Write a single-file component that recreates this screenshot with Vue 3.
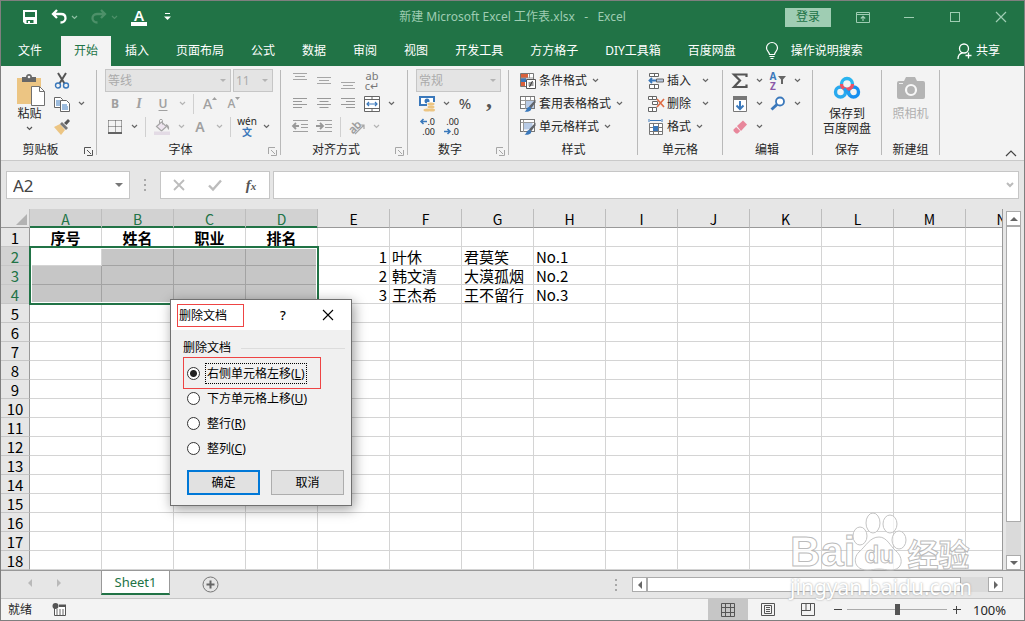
<template>
  <div class="window">
    <header class="title-bar">
      <div class="quick-access">
        <button class="qa-btn" aria-label="保存"><Icon name="save" /></button>
        <button class="qa-btn" aria-label="撤消"><Icon name="undo" /></button>
        <button class="qa-caret faded" aria-label="撤消列表"><Icon name="caret" :w="7" :h="5" /></button>
        <button class="qa-btn faint" aria-label="恢复"><Icon name="redo" /></button>
        <button class="qa-caret faint" aria-label="恢复列表"><Icon name="caret" :w="7" :h="5" /></button>
        <button class="qa-btn font-bar">A</button>
        <button class="qa-more" aria-label="自定义快速访问工具栏"><Icon name="qaMore" :w="7" :h="8" /></button>
      </div>
      <div class="title">新建 Microsoft Excel 工作表.xlsx&nbsp;&nbsp; -&nbsp;&nbsp; Excel</div>
      <div class="window-controls">
        <button class="login">登录</button>
        <button class="win-btn" aria-label="功能区显示选项"><Icon name="ribbonMode" :w="14" :h="14" /></button>
        <button class="win-btn" aria-label="最小化"><Icon name="minimize" :w="14" :h="14" /></button>
        <button class="win-btn" aria-label="最大化"><Icon name="maximize" :w="14" :h="14" /></button>
        <button class="win-btn" aria-label="关闭"><Icon name="close" :w="14" :h="14" /></button>
      </div>
    </header>

    <nav class="tabs">
      <button
        v-for="tab in tabs"
        :key="tab"
        class="tab"
        :class="{ active: tab === activeTab, file: tab === '文件' }"
        @click="activeTab = tab"
      >{{ tab }}</button>
      <button class="tell-me"><Icon name="bulb" :w="14" :h="18" />操作说明搜索</button>
      <button class="share"><Icon name="share" />共享</button>
    </nav>

    <section class="ribbon">
      <div class="group clipboard">
        <div class="group-body row-body">
          <button class="big-btn paste">
            <Icon name="paste" :w="30" :h="32" />
            <span>粘贴</span>
            <Icon name="caret" :w="7" :h="5" />
          </button>
          <div class="rows">
            <div class="tool-row"><button class="tool" aria-label="剪切"><Icon name="cut" /></button></div>
            <div class="tool-row">
              <button class="tool" aria-label="复制"><Icon name="copy" /></button>
              <button class="drop" aria-label="复制选项"><Icon name="caret" :w="7" :h="5" /></button>
            </div>
            <div class="tool-row"><button class="tool" aria-label="格式刷"><Icon name="brush" /></button></div>
          </div>
        </div>
        <div class="group-label"><span>剪贴板</span><button class="launcher" aria-label="剪贴板设置"><Icon name="launcher" :w="9" :h="9" /></button></div>
      </div>
      <i class="divider"></i>

      <div class="group font">
        <div class="group-body">
          <div class="tool-row selects">
            <span class="select-wrap font-name"><select aria-label="字体" disabled><option>等线</option></select></span>
            <span class="select-wrap font-size"><select aria-label="字号" disabled><option>11</option></select></span>
          </div>
          <div class="tool-row disabled">
            <button class="tool letter bold" disabled>B</button>
            <button class="tool letter italic" disabled>I</button>
            <button class="tool letter underline" disabled>U</button>
            <button class="drop" aria-label="下划线选项" disabled><Icon name="caret" :w="7" :h="5" /></button>
            <i class="sep"></i>
            <button class="tool letter grow" disabled>A<Icon name="triUp" :w="5" :h="10" /></button>
            <button class="tool letter shrink" disabled>A<Icon name="triDown" :w="5" :h="10" /></button>
          </div>
          <div class="tool-row">
            <button class="tool" aria-label="边框"><Icon name="borders" /></button>
            <button class="drop" aria-label="边框选项"><Icon name="caret" :w="7" :h="5" /></button>
            <i class="sep"></i>
            <button class="tool" aria-label="填充颜色" disabled><Icon name="bucket" /></button>
            <button class="drop pale" aria-label="填充选项" disabled><Icon name="caret" :w="7" :h="5" /></button>
            <button class="tool letter color" disabled>A</button>
            <button class="drop pale" aria-label="颜色选项" disabled><Icon name="caret" :w="7" :h="5" /></button>
            <i class="sep"></i>
            <button class="tool wen"><span>wén</span><b>文</b></button>
            <button class="drop" aria-label="拼音选项"><Icon name="caret" :w="7" :h="5" /></button>
          </div>
        </div>
        <div class="group-label"><span>字体</span><button class="launcher pale" aria-label="字体设置"><Icon name="launcher" :w="9" :h="9" /></button></div>
      </div>
      <i class="divider"></i>

      <div class="group align">
        <div class="group-body">
          <div class="tool-row">
            <button class="tool" aria-label="顶端对齐"><Icon name="alignTop" /></button>
            <button class="tool" aria-label="垂直居中"><Icon name="alignMiddle" /></button>
            <button class="tool" aria-label="底端对齐"><Icon name="alignBottom" /></button>
            <button class="tool wrap"><span>ab</span><span>c↵</span></button>
          </div>
          <div class="tool-row">
            <button class="tool" aria-label="左对齐"><Icon name="alignLeft" /></button>
            <button class="tool" aria-label="居中"><Icon name="alignCenter" /></button>
            <button class="tool" aria-label="右对齐"><Icon name="alignRight" /></button>
            <button class="tool" aria-label="合并后居中"><Icon name="merge" /></button>
            <button class="drop" aria-label="合并选项"><Icon name="caret" :w="7" :h="5" /></button>
          </div>
          <div class="tool-row">
            <button class="tool" aria-label="减少缩进量"><Icon name="outdent" /></button>
            <button class="tool" aria-label="增加缩进量"><Icon name="indent" /></button>
            <i class="sep"></i>
            <button class="tool" aria-label="方向"><Icon name="orient" /></button>
            <button class="drop pale" aria-label="方向选项"><Icon name="caret" :w="7" :h="5" /></button>
          </div>
        </div>
        <div class="group-label"><span>对齐方式</span><button class="launcher pale" aria-label="对齐设置"><Icon name="launcher" :w="9" :h="9" /></button></div>
      </div>
      <i class="divider"></i>

      <div class="group number">
        <div class="group-body">
          <div class="tool-row selects">
            <span class="select-wrap"><select aria-label="数字格式" disabled><option>常规</option></select></span>
          </div>
          <div class="tool-row">
            <button class="tool" aria-label="会计数字格式"><Icon name="money" /></button>
            <button class="drop" aria-label="货币选项"><Icon name="caret" :w="7" :h="5" /></button>
            <button class="tool percent">%</button>
            <button class="tool comma">,</button>
          </div>
          <div class="tool-row">
            <button class="tool decimals" aria-label="增加小数位数">
              <span><Icon name="arrowLeft" :w="7" :h="7" />.0</span>
              <span>.00</span>
            </button>
            <button class="tool decimals" aria-label="减少小数位数">
              <span>.00</span>
              <span><Icon name="arrowRight" :w="7" :h="7" />.0</span>
            </button>
          </div>
        </div>
        <div class="group-label"><span>数字</span><button class="launcher pale" aria-label="数字设置"><Icon name="launcher" :w="9" :h="9" /></button></div>
      </div>
      <i class="divider"></i>

      <div class="group styles">
        <div class="group-body">
          <div v-for="item in styleItems" :key="item.text" class="tool-row">
            <button class="text-btn"><Icon :name="item.icon" />{{ item.text }}<Icon name="caret" class="tail" :w="7" :h="5" /></button>
          </div>
        </div>
        <div class="group-label"><span>样式</span></div>
      </div>
      <i class="divider"></i>

      <div class="group cells">
        <div class="group-body">
          <div v-for="item in cellItems" :key="item.text" class="tool-row">
            <button class="text-btn" :class="{ split: item.split }"><Icon :name="item.icon" />{{ item.text }}<Icon name="caret" class="tail" :w="7" :h="5" /></button>
          </div>
        </div>
        <div class="group-label"><span>单元格</span></div>
      </div>
      <i class="divider"></i>

      <div class="group edit">
        <div class="group-body">
          <div class="tool-row">
            <button class="tool" aria-label="自动求和"><Icon name="sigma" /></button>
            <button class="drop" aria-label="求和选项"><Icon name="caret" :w="7" :h="5" /></button>
            <button class="tool sort" aria-label="排序和筛选">
              <span class="az"><b>A</b><b class="z">Z</b></span>
              <Icon name="funnel" :w="8" :h="9" />
            </button>
            <button class="drop" aria-label="排序选项"><Icon name="caret" :w="7" :h="5" /></button>
          </div>
          <div class="tool-row">
            <button class="tool" aria-label="填充"><Icon name="fill" /></button>
            <button class="drop" aria-label="填充方向"><Icon name="caret" :w="7" :h="5" /></button>
            <button class="tool" aria-label="查找和选择"><Icon name="find" /></button>
            <button class="drop" aria-label="查找选项"><Icon name="caret" :w="7" :h="5" /></button>
          </div>
          <div class="tool-row">
            <button class="tool" aria-label="清除"><Icon name="eraser" /></button>
            <button class="drop" aria-label="清除选项"><Icon name="caret" :w="7" :h="5" /></button>
          </div>
        </div>
        <div class="group-label"><span>编辑</span></div>
      </div>
      <i class="divider"></i>

      <div class="group netdisk">
        <div class="group-body">
          <button class="big-btn">
            <Icon name="netdisk" :w="30" :h="32" />
            <span>保存到<br>百度网盘</span>
          </button>
        </div>
        <div class="group-label"><span>保存</span></div>
      </div>
      <i class="divider"></i>

      <div class="group camera">
        <div class="group-body">
          <button class="big-btn" disabled>
            <Icon name="camera" :w="30" :h="32" />
            <span>照相机</span>
          </button>
        </div>
        <div class="group-label"><span>新建组</span></div>
      </div>
      <i class="divider"></i>
      <button class="collapse" aria-label="折叠功能区"><Icon name="collapse" :w="12" :h="7" /></button>
    </section>

    <section class="formula-bar">
      <div class="name-box">
        <input v-model="cellName" aria-label="名称框">
        <i class="triangle"></i>
      </div>
      <Icon name="dots" class="grip" :w="3" :h="12" />
      <div class="formula-tools">
        <button aria-label="取消输入" disabled><Icon name="fxCancel" /></button>
        <button aria-label="确认输入" disabled><Icon name="fxOk" /></button>
        <button class="fx"><i>f</i><small>x</small></button>
      </div>
      <div class="formula-input">
        <input aria-label="编辑栏">
        <Icon name="caretBold" :w="8" :h="6" />
      </div>
    </section>

    <main class="workspace">
      <div class="sheet">
        <table>
          <thead>
            <tr>
              <th class="corner"><Icon name="corner" :w="12" :h="12" /></th>
              <th v-for="(col, c) in columns" :key="col" :class="{ picked: c < 4 }">{{ col }}</th>
            </tr>
          </thead>
          <tbody>
            <tr v-for="row in 18" :key="row">
              <th :class="{ picked: row > 1 && row < 5 }">{{ row }}</th>
              <td
                v-for="(col, c) in columns"
                :key="col"
                :class="{
                  head: row === 1,
                  num: col === 'E',
                  shaded: c < 4 && row > 1 && row < 5 && !(c === 0 && row === 2)
                }"
              >{{ cells[col + row] }}</td>
            </tr>
          </tbody>
        </table>
        <div class="selection"></div>
      </div>
      <div class="v-scroll">
        <button class="scroll-btn" aria-label="向上滚动"><i class="up"></i></button>
        <div class="track"><div class="thumb"></div></div>
        <button class="scroll-btn" aria-label="向下滚动"><i class="down"></i></button>
      </div>

      <form class="dialog" role="dialog" aria-labelledby="dialog-title" @submit.prevent>
        <div class="dialog-title">
          <span id="dialog-title" class="marked">删除文档</span>
          <button type="button" class="help">?</button>
          <button type="button" class="dismiss" aria-label="关闭"><Icon name="dialogClose" :w="12" :h="12" /></button>
        </div>
        <div class="dialog-body">
          <div class="legend">删除文档</div>
          <div class="choices" role="radiogroup" aria-label="删除文档">
            <div v-for="choice in choices" :key="choice.key" class="choice" :class="{ marked: choice.key === 'L' }">
              <input :id="'choice-' + choice.key" v-model="picked" type="radio" name="shift" :value="choice.key">
              <label :for="'choice-' + choice.key" :class="{ focus: picked === choice.key }">{{ choice.text }}(<u>{{ choice.key }}</u>)</label>
            </div>
          </div>
          <div class="actions">
            <button type="submit" class="primary">确定</button>
            <button type="button">取消</button>
          </div>
        </div>
      </form>
    </main>

    <section class="sheet-bar">
      <div class="sheet-nav">
        <button aria-label="上一个工作表"><i class="left"></i></button>
        <button aria-label="下一个工作表"><i class="right"></i></button>
      </div>
      <button class="sheet-tab">Sheet1</button>
      <button class="add-sheet" aria-label="新工作表"><Icon name="add" :w="17" :h="17" /></button>
      <Icon name="dots" class="grip" :w="3" :h="12" />
      <div class="h-scroll">
        <button class="scroll-btn" aria-label="向左滚动"><i class="left"></i></button>
        <div class="track"><div class="thumb"></div></div>
        <button class="scroll-btn" aria-label="向右滚动"><i class="right"></i></button>
      </div>
    </section>

    <footer class="status-bar">
      <span>就绪</span>
      <Icon name="macro" class="macro" :w="14" :h="14" />
      <div class="views">
        <button class="on" aria-label="普通"><Icon name="viewGrid" /></button>
        <button aria-label="页面布局"><Icon name="viewPage" /></button>
        <button aria-label="分页预览"><Icon name="viewBreak" /></button>
      </div>
      <button class="zoom-btn" aria-label="缩小"><Icon name="minus" :w="9" :h="9" /></button>
      <input v-model="zoom" class="zoom-range" type="range" min="0" max="200" aria-label="显示比例">
      <button class="zoom-btn" aria-label="放大"><Icon name="plus" :w="9" :h="9" /></button>
      <span class="zoom-text">{{ zoom }}%</span>
    </footer>

    <div class="watermark">
      <div class="brand">
        <span class="bai">Bai</span>
        <span class="paw"><Icon name="paw" :w="60" :h="62" /><span class="du">du</span></span>
        <span class="cn">经验</span>
      </div>
      <div class="url">jingyan.baidu.com</div>
    </div>
  </div>
</template>

<script setup>
import { ref, h } from 'vue'

const gridBase = '<rect x=".5" y=".5" width="14" height="12" fill="#fff" stroke="#777"/><path d="M5.500 1v12M10.500 1v12M1 4.500h13M1 8.500h13" stroke="#999" fill="none"/>'
const stylePen = '<path d="M15.500 3.500l-6.500 7 2 2 4.500-6z" fill="#5f6368"/><path d="M4.500 15.500c2-.5 2-4 4.500-4.500 2 0 3 2 1.500 3.500-1.500 1.200-4 1.500-6 1z" fill="#3a78bb"/>'

const icons = {
  caret: '<path d="M1 1l2.500 2.500L6 1" fill="none" stroke="currentColor" stroke-width="1.200"/>',
  caretBold: '<path d="M1 1l3 3 3-3" fill="none" stroke="currentColor" stroke-width="2"/>',
  save: '<path d="M1 1h14v14H3l-2-2z" fill="#fff"/><path d="M3 3h10v5H3z" fill="#217346"/><path d="M4.500 11h7v3h-7z" fill="#217346"/><path d="M6 12h2v3H6z" fill="#fff"/>',
  undo: '<path d="M6 1L2 5l4 4M2.500 5H10c3 0 4.500 2 4.500 4.200S12.800 13.500 9.500 13.500" fill="none" stroke="currentColor" stroke-width="2.300"/>',
  redo: '<path d="M10 1l4 4-4 4M13.500 5H6C3 5 1.500 7 1.500 9.200S3.200 13.500 6.500 13.500" fill="none" stroke="currentColor" stroke-width="2.300"/>',
  qaMore: '<path d="M1 .5h5" stroke="#fff"/><path d="M0 3.500h7L3.500 7z" fill="#fff"/>',
  ribbonMode: '<path d="M.5 2.500h13v10H.5zM.5 4.500h13" fill="none" stroke="currentColor"/><path d="M7 11V6.500M4.800 8.500L7 6.300l2.200 2.200" fill="none" stroke="currentColor" stroke-width="1.200"/>',
  minimize: '<path d="M2 7.500h10" stroke="currentColor"/>',
  maximize: '<rect x="2.500" y="2.500" width="9" height="9" fill="none" stroke="currentColor"/>',
  close: '<path d="M2 2l10 10M12 2L2 12" stroke="currentColor" stroke-width="1.200"/>',
  bulb: '<path d="M4.500 12.500c0-2.500-3-3.500-3-6.500a5.500 5.500 0 0 1 11 0c0 3-3 4-3 6.500zM4.500 14.500h5M5.500 16.500h3" fill="none" stroke="#fff" stroke-width="1.200"/>',
  share: '<circle cx="7" cy="5.500" r="4.500" fill="none" stroke="#fff" stroke-width="1.300"/><path d="M1 16c0-3.500 1.500-5.500 4.500-6.200M8.500 12.500h6M11.500 9.500v6" fill="none" stroke="#fff" stroke-width="1.300"/>',
  paste: '<path d="M2 4h24v26H2z" fill="#ecc583"/><path d="M7 8V3h4c0-4 6-4 6 0h4v5z" fill="#676767"/><circle cx="14" cy="3" r="1.300" fill="#f3f3f3"/><path d="M16.500 12.500h8l5 5v14h-13z" fill="#fff" stroke="#707070"/><path d="M24.500 12.500v5h5" fill="none" stroke="#707070"/>',
  cut: '<path d="M4 0l6.500 10.500M12 0L5.500 10.500" stroke="#555" stroke-width="2" fill="none"/><circle cx="4" cy="12.500" r="2.500" fill="#f3f3f3" stroke="#3a78bb" stroke-width="1.400"/><circle cx="12" cy="12.500" r="2.500" fill="#f3f3f3" stroke="#3a78bb" stroke-width="1.400"/>',
  copy: '<path d="M.5 1.500h6l2 2v8h-8z" fill="#fff" stroke="#666"/><path d="M2 5h4M2 7h4M2 9h4" stroke="#3a78bb"/><path d="M6.500 4.500h6l3 3v8h-9z" fill="#fff" stroke="#666"/><path d="M8 9h5M8 11h6M8 13h6" stroke="#3a78bb"/>',
  brush: '<path d="M0 8l6-3 5 6-4 5z" fill="#ecc583"/><path d="M6 5l2-2 6 6-2 2z" fill="#777"/><path d="M10 4l4-4 2 2-3.500 4z" fill="#555"/>',
  launcher: '<path d="M.5 7V.5H7M3 3l4 4M8.500 3v5.500H3" fill="none" stroke="currentColor"/>',
  triUp: '<path d="M0 3h5L2.500 0z" fill="currentColor"/>',
  triDown: '<path d="M0 0h5L2.500 3z" fill="currentColor"/>',
  borders: '<path d="M1.500 1.500h13M1.500 7.500h13M1.500 1.500v12M8.500 1.500v12M14.500 1.500v12" stroke="#555" stroke-dasharray="1 1" fill="none"/><path d="M1 14h14" stroke="#333" stroke-width="1.500"/>',
  bucket: '<path d="M2.500 7.500l5-4.500 5 4.500-5 4.500z" fill="#eee5ef" stroke="#a6a6a6" stroke-width="1.200"/><path d="M5.500 5V1.500c0-1.500 3-1.500 3 0v4" fill="none" stroke="#a6a6a6"/><path d="M12 5c3 1 4 4 2.500 6-1-1-1-3-2.500-4z" fill="#a6a6a6"/><path d="M0 12.500h16V16H0z" fill="#e3dbe5"/>',
  alignTop: '<path d="M1 .5h14M3 3.500h10M1 6.500h14" stroke="#a6a6a6"/>',
  alignMiddle: '<path d="M1 4.500h14M3 7.500h10M1 10.500h14" stroke="#a6a6a6"/>',
  alignBottom: '<path d="M1 9.500h14M3 12.500h10M1 15.500h14" stroke="#a6a6a6"/>',
  alignLeft: '<path d="M1 2.500h14M1 5.500h9M1 8.500h14M1 11.500h9" stroke="#999"/>',
  alignCenter: '<path d="M1 2.500h14M3.500 5.500h9M1 8.500h14M3.500 11.500h9" stroke="#999"/>',
  alignRight: '<path d="M1 2.500h14M6 5.500h9M1 8.500h14M6 11.500h9" stroke="#999"/>',
  merge: '<path d="M.5.500h15v15H.5zM.5 3.500h15M.5 12.500h15M8 .5v3M8 12.500v3" fill="#fff" stroke="#666"/><path d="M3 8h10M5 6L3 8l2 2M11 6l2 2-2 2" fill="none" stroke="#3a78bb" stroke-width="1.200"/>',
  outdent: '<path d="M1 1.500h15M9 5.500h7M9 8.500h7M1 12.500h15" stroke="#a0a0a0"/><path d="M7 7H1M4 4L1 7l3 3" fill="none" stroke="#999" stroke-width="1.800"/>',
  indent: '<path d="M1 1.500h15M9 5.500h7M9 8.500h7M1 12.500h15" stroke="#a0a0a0"/><path d="M0 7h6M4 4l3 3-3 3" fill="none" stroke="#999" stroke-width="1.800"/>',
  orient: '<text x="0" y="12" font-size="11" font-family="Noto Sans" fill="#999" stroke="#999" stroke-width=".4" transform="rotate(-45 6 9)">ab</text><path d="M6 15l9-9M11 6h4v4" fill="none" stroke="#a6a6a6" stroke-width="1.200"/>',
  money: '<path d="M0 0h16v10H0z" fill="#3a78bb"/><path d="M2 2h12v6H2z" fill="#fff"/><circle cx="8" cy="5" r="2.500" fill="#3a78bb"/><path d="M8 6h8v10H4v-5h4z" fill="#f3f3f3"/><ellipse cx="12" cy="8" rx="3.500" ry="1.500" fill="#ecc583"/><ellipse cx="12" cy="11" rx="3.500" ry="1.500" fill="#ecc583"/><ellipse cx="8" cy="14" rx="3.500" ry="1.500" fill="#ecc583"/><ellipse cx="13" cy="14" rx="3" ry="1.500" fill="#ecc583"/>',
  arrowLeft: '<path d="M7 3.500H1M3.500 1L1 3.500 3.500 6" fill="none" stroke="#3a78bb" stroke-width="1.600"/>',
  arrowRight: '<path d="M0 3.500h6M3.500 1L6 3.500 3.500 6" fill="none" stroke="#3a78bb" stroke-width="1.600"/>',
  condFormat: '<path d="M.5.500h13v13H.5z" fill="#fff" stroke="#777"/><path d="M1 1h7v4H1zM1 9h4v4H1z" fill="#d9603b"/><path d="M1 5h5v4H1z" fill="#3a78bb"/><path d="M9.500 1v4M1 5h12" stroke="#999"/><path d="M6.500 6.500h9v9h-9z" fill="#fff" stroke="#555"/><path d="M8.500 10h5M8.500 12h5M12.500 8l-3 6" stroke="#333" fill="none"/>',
  tableFormat: gridBase + '<path d="M6 5h8v7H6z" fill="#b8cbe6"/>' + stylePen,
  cellStyle: '<rect x=".5" y=".5" width="14" height="12" fill="#fff" stroke="#777"/><path d="M3.500 3.500h9v7h-9z" fill="#b8cbe6"/><path d="M1 3.500h13M3.500 1v12" stroke="#999"/>' + stylePen,
  insertCell: '<path d="M1.500.500h9v3h-9zM6.500.500v3M1.500 11.500h9v4h-9zM6.500 11.500v4" fill="#fff" stroke="#666"/><path d="M8.500 6h7v3h-7z" fill="#b8cbe6" stroke="#666"/><path d="M8 7.500H1.500M4 5L1.500 7.500 4 10" fill="none" stroke="#3a78bb" stroke-width="1.800"/>',
  deleteCell: '<path d="M.5.500h8v3h-8zM4.500.500v3M4.500 5.500h5v3h-5zM.5 11.500h8v4h-8zM4.500 11.500v4" fill="#fff" stroke="#666"/><path d="M9 3l7 8M16 3l-7 8" stroke="#df6b42" stroke-width="1.600"/>',
  formatCell: '<path d="M1 0v3M14 0v3M2 1.500h11" stroke="#3a78bb" fill="none"/><path d="M1.500 4.500h13v11h-13zM5.500 4.500v11M10.500 4.500v11M1.500 8.500h13M1.500 12.500h13" fill="#fff" stroke="#777"/><path d="M5 7h5v5H5z" fill="#3a78bb"/>',
  sigma: '<path d="M14.500 4V1.500H2L8 7.500 2 14h12.500v-2.500" fill="none" stroke="#555" stroke-width="2.200"/>',
  funnel: '<path d="M0 0h8L5 3.500V8H3V3.500z" fill="#666"/>',
  fill: '<path d="M1.500.500h13v15h-13z" fill="#fff" stroke="#777"/><path d="M1 0h14v4H1z" fill="#777"/><path d="M8 5v8M4.500 9.500L8 13l3.500-3.500" fill="none" stroke="#3a78bb" stroke-width="2"/>',
  find: '<circle cx="10" cy="5.500" r="4" fill="#fff" stroke="#3a78bb" stroke-width="1.800"/><path d="M7 8.500l-5.500 5" stroke="#3a78bb" stroke-width="3"/>',
  eraser: '<path d="M5 7l6-5.500 4 4L9 12z" fill="#e8879b"/><path d="M4.200 8l4 4-2.500 2.500H4L1.500 12v-1.500z" fill="#e8879b"/>',
  netdisk: '<circle cx="8.500" cy="18" r="5" fill="none" stroke="#29a9ee" stroke-width="3.400"/><circle cx="21.500" cy="18" r="5" fill="none" stroke="#168ff0" stroke-width="3.400"/><path d="M9.500 10a5.500 5.500 0 0 1 11 0" fill="none" stroke="#2ab4ef" stroke-width="3.400"/><path d="M9.500 10c0 7 11 7 11 0" fill="none" stroke="#ef5064" stroke-width="3.400"/><path d="M12 14.500l6.500 7" stroke="#209eef" stroke-width="3.200"/>',
  camera: '<path d="M3 7h5l2-4h9l2 4h6q2 0 2 2v14q0 2-2 2H3q-2 0-2-2V9q0-2 2-2z" fill="#b4b4b4"/><circle cx="15" cy="16" r="5" fill="#b4b4b4" stroke="#f8f8f8" stroke-width="2.200"/><path d="M3 9.500h4" stroke="#eee"/>',
  collapse: '<path d="M1 6l5-5 5 5" fill="none" stroke="#444" stroke-width="1.200"/>',
  dots: '<path d="M0 0h2v2H0zM0 5h2v2H0zM0 10h2v2H0z" fill="#a8a8a8"/>',
  fxCancel: '<path d="M3 3l10 10M13 3L3 13" stroke="#bcbcbc" stroke-width="1.800"/>',
  fxOk: '<path d="M2 8.500l4 4L14 3.500" fill="none" stroke="#bcbcbc" stroke-width="2.400"/>',
  corner: '<path d="M12 1v11H1z" fill="#b2b2b2"/>',
  dialogClose: '<path d="M1 1l10 10M11 1L1 11" stroke="#000" stroke-width="1.100"/>',
  add: '<circle cx="8.500" cy="8.500" r="7.500" fill="none" stroke="#777"/><path d="M8.500 4.500v8M4.500 8.500h8" stroke="#666" stroke-width="2"/>',
  macro: '<path d="M2.500 3v9.500h11v-10H7" fill="#fff" stroke="#555"/><path d="M7 1.500h7V4H7z" fill="#555"/><circle cx="3.500" cy="3" r="3" fill="#555"/><path d="M4 7h8M4 9h8M4 11h8" stroke="#666" stroke-dasharray="2 1"/>',
  viewGrid: '<path d="M1.500 1.500h13v13h-13zM5.500 1.500v13M10.500 1.500v13M1.500 5.500h13M1.500 10.500h13" fill="none" stroke="#555"/>',
  viewPage: '<path d="M1.500 1.500h13v12h-13zM4.500 3.500h7v8h-7zM6 5.500h4M6 7.500h4M6 9.500h4" fill="none" stroke="#555"/>',
  viewBreak: '<path d="M1.500 1.500h13v12h-13zM1.500 8.500h9v-7M6 1.500v7" fill="none" stroke="#555"/>',
  minus: '<path d="M1 4.500h8" stroke="#444"/>',
  plus: '<path d="M1 4.500h8M4.500 1v8" stroke="#444"/>',
  paw: '<g fill="#fff" fill-opacity=".75" stroke="#c4c4c4"><ellipse cx="24" cy="11" rx="7" ry="10"/><ellipse cx="41" cy="12" rx="7" ry="9"/><ellipse cx="11" cy="24" rx="7" ry="9"/><ellipse cx="50" cy="28" rx="7" ry="9"/><path d="M30 25c8 0 11 9 17 14 8 7 7 19-5 19-5 0-8-1-12-1s-7 1-12 1C6 58 3 47 10 40c7-6 11-15 20-15z"/></g>'
}

const Icon = ({ name, w = 16, h: height = 16 }) =>
  h('svg', { width: w, height, viewBox: `0 0 ${w} ${height}`, 'aria-hidden': 'true', innerHTML: icons[name] })
Icon.props = ['name', 'w', 'h']

const tabs = ['文件', '开始', '插入', '页面布局', '公式', '数据', '审阅', '视图', '开发工具', '方方格子', 'DIY工具箱', '百度网盘']
const activeTab = ref('开始')

const styleItems = [
  { icon: 'condFormat', text: '条件格式' },
  { icon: 'tableFormat', text: '套用表格格式' },
  { icon: 'cellStyle', text: '单元格样式' }
]

const cellItems = [
  { icon: 'insertCell', text: '插入', split: true },
  { icon: 'deleteCell', text: '删除', split: true },
  { icon: 'formatCell', text: '格式' }
]

const columns = 'ABCDEFGHIJKLMN'.split('')
const cellName = ref('A2')
const cells = {
  A1: '序号', B1: '姓名', C1: '职业', D1: '排名',
  E2: 1, F2: '叶休', G2: '君莫笑', H2: 'No.1',
  E3: 2, F3: '韩文清', G3: '大漠孤烟', H3: 'No.2',
  E4: 3, F4: '王杰希', G4: '王不留行', H4: 'No.3'
}

const choices = [
  { key: 'L', text: '右侧单元格左移' },
  { key: 'U', text: '下方单元格上移' },
  { key: 'R', text: '整行' },
  { key: 'C', text: '整列' }
]
const picked = ref('L')
const zoom = ref(100)
</script>

<style>
body {
  background: #e6e6e6;
}
</style>

<style scoped>
* {
  box-sizing: border-box;
}

.window {
  position: relative;
  display: flex;
  flex-direction: column;
  min-height: 100vh;
  overflow: hidden;
  border: 1px solid #7f7f7f;
  background: #e6e6e6;
  color: #262626;
  font: 12px/16px "Noto Sans", "Noto Sans CJK SC", sans-serif;
}

button,
input,
select {
  margin: 0;
  padding: 0;
  border: 0;
  background: none;
  color: inherit;
  font: inherit;
}

svg {
  display: block;
  flex: none;
  overflow: visible;
}

/* title bar */
.title-bar {
  display: grid;
  grid-template-columns: 1fr auto 1fr;
  align-items: center;
  height: 35px;
  padding-bottom: 3px;
  background: #217346;
  color: #9fcdb3;
}

.quick-access {
  display: flex;
  align-items: center;
  padding-left: 21px;
  color: #fff;
}

.qa-btn {
  width: 16px;
  margin-right: 13px;
}

.qa-caret {
  width: 7px;
  margin: 0 12px 0 -9px;
}

.qa-caret + .qa-btn {
  margin-left: 1px;
}

.font-bar {
  border-bottom: 4px solid #fff;
  font-size: 15px;
  font-weight: 600;
  line-height: 14px;
}

.qa-more {
  margin-left: 4px;
}

.faded {
  color: #8fc0a4;
}

.faint {
  color: #4d9069;
}

.title {
  white-space: nowrap;
}

.window-controls {
  display: flex;
  align-items: center;
  justify-content: flex-end;
  padding-right: 16px;
}

.login {
  width: 46px;
  height: 19px;
  margin-right: 25px;
  background: #9fcdb3;
  color: #217346;
}

.win-btn {
  width: 14px;
  margin-left: 32px;
}

.login + .win-btn {
  margin-left: 0;
}

/* tabs */
.tabs {
  display: flex;
  height: 30px;
  gap: 1px;
  padding-left: 4px;
  background: #217346;
  color: #fff;
}

.tab {
  padding: 0 13px 1px;
  white-space: nowrap;
}

.tab.file {
  margin-right: 5px;
}

.tab.active {
  background: #f3f3f3;
  color: #217346;
}

.tell-me,
.share {
  display: flex;
  align-items: center;
  gap: 12px;
  margin-left: 15px;
  padding-bottom: 1px;
  white-space: nowrap;
}

.share {
  gap: 3px;
  margin-left: auto;
  padding-right: 24px;
}

/* ribbon */
.ribbon {
  display: flex;
  height: 95px;
  padding-top: 3px;
  border-bottom: 1px solid #c9c9c9;
  background: #f3f3f3;
}

.group {
  display: flex;
  flex: none;
  flex-direction: column;
}

.group-body {
  height: 69px;
}

.row-body {
  display: flex;
}

.divider {
  width: 1px;
  margin: 1px 0 5px;
  background: #b9b9b9;
}

.clipboard {
  width: 95px;
}

.font {
  width: 183px;
  padding-left: 6px;
}

.align {
  width: 126px;
  padding-left: 7px;
}

.number {
  width: 100px;
  padding-left: 7px;
}

.styles {
  width: 128px;
  padding-left: 11px;
}

.cells {
  width: 84px;
  padding-left: 10px;
}

.edit {
  width: 89px;
  padding-left: 5px;
}

.netdisk {
  width: 68px;
}

.camera {
  width: 57px;
}

.group-label {
  display: flex;
  align-items: center;
  height: 22px;
  padding-top: 2px;
}

.group-label span {
  flex: 1;
  text-align: center;
}

.font .group-label,
.edit .group-label {
  margin-left: -6px;
}

.align .group-label,
.number .group-label {
  margin-left: -7px;
}

.styles .group-label,
.cells .group-label {
  margin-left: -10px;
}

.launcher {
  width: 9px;
  margin: 3px 3px 0 4px;
  color: #555;
}

.launcher.pale {
  color: #a6a6a6;
}

.tool-row {
  display: flex;
  align-items: center;
  height: 23px;
}

.tool {
  display: flex;
  align-items: center;
  justify-content: center;
  width: 24px;
  height: 22px;
}

.drop {
  display: flex;
  align-items: center;
  justify-content: center;
  width: 14px;
  height: 22px;
  color: #666;
}

.drop.pale,
.disabled .drop {
  color: #b4b4b4;
}

.sep {
  width: 1px;
  height: 20px;
  margin: 0 4px;
  background: #d0d0d0;
}

.letter {
  color: #a0a0a0;
}

.bold {
  font-weight: 700;
}

.italic {
  font: italic 700 14px/16px "Liberation Serif", serif;
}

.underline {
  font-weight: 600;
  text-decoration: underline;
  text-underline-offset: 2px;
}

.color {
  font-size: 14px;
  font-weight: 600;
}

.grow {
  font-size: 14px;
  font-weight: 500;
}

.shrink {
  font-weight: 500;
}

.grow svg,
.shrink svg {
  align-self: flex-start;
  margin-top: 4px;
}

.wen {
  flex-direction: column;
  font-size: 10px;
  line-height: 11px;
}

.wen b {
  color: #3a78bb;
}

.wrap {
  flex-direction: column;
  color: #777;
  font-size: 11px;
  line-height: 10px;
}

.percent {
  padding-bottom: 2px;
  color: #444;
  font-size: 15px;
}

.comma {
  padding-bottom: 10px;
  color: #555;
  font: 700 24px/12px "Liberation Serif", serif;
}

.decimals {
  flex-direction: column;
  align-items: flex-end;
  padding-right: 4px;
  font-size: 9px;
  line-height: 10px;
}

.decimals span {
  display: flex;
  align-items: center;
}

.sort {
  gap: 2px;
}

.az {
  display: flex;
  flex-direction: column;
  color: #3a78bb;
  font-size: 10px;
  line-height: 10px;
}

.az .z {
  color: #8a57a8;
}

.selects {
  gap: 2px;
  padding: 0 7px 0 2px;
}

.number .selects {
  padding-left: 1px;
}

.select-wrap {
  position: relative;
  flex: 1;
  height: 23px;
}

.select-wrap.font-size {
  flex: none;
  width: 40px;
}

.select-wrap::after {
  position: absolute;
  top: 10px;
  right: 5px;
  border: 3px solid transparent;
  border-top-color: #b4b4b4;
  border-bottom: 0;
  content: "";
}

.select-wrap select {
  width: 100%;
  height: 23px;
  padding: 0 2px;
  appearance: none;
  border: 1px solid #c6c6c6;
  border-radius: 0;
  background: #e4e4e4;
  color: #ababab;
  opacity: 1;
}

.big-btn {
  display: flex;
  flex-direction: column;
  align-items: center;
  width: 100%;
  padding-top: 5px;
  line-height: 15px;
}

.big-btn:disabled {
  color: #b0b0b0;
}

.big-btn.paste {
  width: 49px;
  padding-left: 8px;
}

.paste svg:last-child {
  margin-top: 5px;
  color: #555;
}

.text-btn {
  display: flex;
  align-items: center;
  gap: 3px;
  height: 22px;
  white-space: nowrap;
}

.tail {
  margin-left: 2px;
  color: #666;
}

.split .tail {
  margin-left: 8px;
}

.collapse {
  align-self: flex-end;
  margin: 0 7px 3px auto;
}

/* formula bar */
.formula-bar {
  display: flex;
  align-items: center;
  height: 48px;
  padding: 0 5px;
}

.name-box,
.formula-tools,
.formula-input {
  display: flex;
  align-items: center;
  height: 28px;
  border: 1px solid #c6c6c6;
  background: #fff;
}

.name-box {
  width: 124px;
  padding: 0 6px;
}

.name-box input {
  flex: 1;
  width: 0;
  color: #444;
  font-size: 17px;
}

.triangle {
  border: 4px solid transparent;
  border-top-color: #777;
  border-bottom: 0;
}

.formula-bar .grip {
  margin: 0 13px 0 14px;
}

.formula-tools {
  width: 110px;
  justify-content: space-around;
}

.formula-tools button {
  width: 34px;
  display: flex;
  justify-content: center;
}

.formula-tools .fx {
  align-items: baseline;
  color: #555;
  font: italic 700 15px/16px "Liberation Serif", serif;
}

.fx small {
  font-size: 11px;
}

.formula-input {
  flex: 1;
  margin-left: 3px;
  padding-right: 4px;
  color: #bbb;
}

.formula-input input {
  flex: 1;
}

input:focus-visible {
  outline: none;
}

/* grid */
.workspace {
  position: relative;
  display: flex;
  flex: 1;
}

.sheet {
  position: relative;
  flex: 1;
  min-width: 0;
  overflow: hidden;
  border-right: 1px solid #999;
}

table {
  width: 1037px;
  table-layout: fixed;
  border-collapse: separate;
  border-spacing: 0;
  background: #fff;
  color: #000;
  font: 15px/16px "Noto Sans CJK SC", sans-serif;
}

th,
td {
  height: 19px;
  padding: 2px 2px 0;
  border-right: 1px solid #d4d4d4;
  border-bottom: 1px solid #d4d4d4;
  white-space: nowrap;
}

th {
  background: #e6e6e6;
  font-weight: 400;
}

thead th {
  width: 72px;
  border-right-color: #bdbdbd;
  border-bottom-color: #999;
  font-size: 14px;
}

th.corner {
  width: 29px;
  border-right-color: #bdbdbd;
}

.corner svg {
  margin-left: auto;
}

tbody th {
  border-right-color: #999;
  border-bottom-color: #c6c6c6;
}

th.picked {
  background: #d2d2d2;
  color: #217346;
}

thead .picked {
  border-bottom-color: #217346;
  box-shadow: inset 0 -1px #217346;
}

td.head {
  font-weight: 700;
  text-align: center;
}

td.num {
  text-align: right;
}

td.shaded {
  border-color: #a3a3a3;
  background: #c6c6c6;
}

.selection {
  position: absolute;
  top: 37px;
  left: 28px;
  width: 290px;
  height: 59px;
  border: 2px solid #217346;
  box-shadow: inset 0 0 0 1px #fff;
}

.v-scroll {
  display: flex;
  flex-direction: column;
  width: 15px;
  margin: 2px 3px 0;
}

.scroll-btn {
  display: flex;
  flex: none;
  align-items: center;
  justify-content: center;
  width: 15px;
  height: 15px;
  border: 1px solid #ababab;
  background: #fff;
}

.up,
.down,
.left,
.right {
  border: 4px solid transparent;
}

.up {
  border-top: 0;
  border-bottom-color: #666;
}

.down {
  border-bottom: 0;
  border-top-color: #666;
}

.left {
  border-left: 0;
  border-right-color: #666;
}

.right {
  border-right: 0;
  border-left-color: #666;
}

.track {
  display: flex;
  flex: 1;
  background: #dadada;
}

.thumb {
  border: 1px solid #ababab;
  background: #fff;
}

.v-scroll .thumb {
  width: 100%;
  height: 90%;
}

.h-scroll .thumb {
  width: 92%;
}

/* dialog */
.dialog {
  position: absolute;
  top: 90px;
  left: 169px;
  width: 182px;
  border: 1px solid #707070;
  background: #f0f0f0;
  box-shadow: 2px 3px 12px rgba(0, 0, 0, 0.4);
  color: #000;
}

.dialog-title {
  display: flex;
  align-items: center;
  height: 30px;
  padding: 0 17px 0 6px;
  background: #fff;
}

.marked {
  border: 1px solid #ee4444;
}

.dialog-title .marked {
  width: 67px;
  height: 23px;
  padding: 3px 1px 2px;
}

.help {
  width: 12px;
  margin-left: 33px;
  font-size: 13px;
  font-weight: 500;
}

.dismiss {
  margin-left: auto;
}

.dialog-body {
  padding: 10px 6px 10px 12px;
}

.legend {
  display: flex;
  align-items: center;
  gap: 10px;
}

.legend::after {
  flex: 1;
  height: 1px;
  background: #dcdcdc;
  content: "";
}

.choices {
  padding-top: 1px;
}

.choice {
  display: flex;
  align-items: center;
  gap: 5px;
  width: 138px;
  height: 25px;
  padding-left: 4px;
}

.choice.marked {
  height: 32px;
  margin-bottom: -3px;
  padding-left: 3px;
}

.choice input {
  width: 13px;
  height: 13px;
  appearance: none;
  border: 1px solid #333;
  border-radius: 50%;
  background: #fff;
}

.choice input:checked {
  background: radial-gradient(circle, #222 3px, #fff 4px);
}

.choice label {
  padding: 2px 1px 1px;
  border: 1px solid transparent;
  white-space: nowrap;
}

.choice label.focus {
  border: 1px dotted #000;
}

.actions {
  display: flex;
  gap: 11px;
  padding: 9px 0 0 4px;
}

.actions button {
  width: 73px;
  height: 25px;
  border: 1px solid #adadad;
  background: #e1e1e1;
}

.actions .primary {
  border: 2px solid #0078d7;
}

/* sheet tabs */
.sheet-bar {
  display: flex;
  align-items: flex-start;
  height: 28px;
  border-top: 1px solid #999;
}

.sheet-nav {
  display: flex;
  gap: 25px;
  width: 100px;
  padding: 8px 0 0 27px;
}

.sheet-nav .left {
  border-right-color: #b9b9b9;
}

.sheet-nav .right {
  border-left-color: #b9b9b9;
}

.sheet-nav button,
.sheet-nav i {
  display: block;
}

.sheet-tab {
  width: 69px;
  height: 24px;
  border: solid #999;
  border-width: 0 1px;
  border-bottom: 2px solid #217346;
  background: #fff;
  color: #217346;
  font-size: 13px;
}

.add-sheet {
  margin: 5px 0 0 32px;
}

.sheet-bar .grip {
  margin: 8px 14px 0 auto;
}

.h-scroll {
  display: flex;
  width: 371px;
  height: 15px;
  margin: 6px 21px 0 0;
}

/* status bar */
.status-bar {
  display: flex;
  align-items: center;
  height: 22px;
  padding-left: 7px;
  border-top: 1px solid #c6c6c6;
  background: #f3f3f3;
}

.macro {
  margin-left: 20px;
}

.views {
  display: flex;
  height: 21px;
  margin-left: auto;
}

.views button {
  display: flex;
  align-items: center;
  justify-content: center;
  width: 40px;
}

.views .on {
  background: #c6c6c6;
}

.zoom-btn {
  width: 9px;
  margin: 0 5px;
}

.zoom-range {
  width: 100px;
  height: 11px;
  appearance: none;
  background: linear-gradient(#ababab, #ababab) center / 100% 1px no-repeat;
}

.zoom-range::-webkit-slider-thumb {
  width: 5px;
  height: 11px;
  appearance: none;
  background: #555;
}

.zoom-text {
  width: 58px;
  padding-left: 7px;
  font-size: 13px;
}

/* watermark */
.watermark {
  position: absolute;
  right: 52px;
  bottom: 20px;
  color: rgba(255, 255, 255, 0.8);
  font-weight: 700;
  pointer-events: none;
  white-space: nowrap;
  -webkit-text-stroke: 1px rgba(175, 175, 175, 0.85);
}

.brand {
  display: flex;
  align-items: flex-end;
  height: 62px;
}

.bai {
  font: 700 42px/44px "Liberation Sans", sans-serif;
}

.paw {
  position: relative;
  width: 58px;
  margin-left: -6px;
}

.du {
  position: absolute;
  bottom: 5px;
  left: 15px;
  font: 700 24px/28px "Liberation Sans", sans-serif;
}

.cn {
  font: 700 31px/42px "Noto Sans CJK SC", sans-serif;
}

.url {
  color: #fff;
  font-weight: 400;
  font-size: 21px;
  line-height: 26px;
  -webkit-text-stroke: 0;
  text-shadow: 0 0 2px #999;
}
</style>
